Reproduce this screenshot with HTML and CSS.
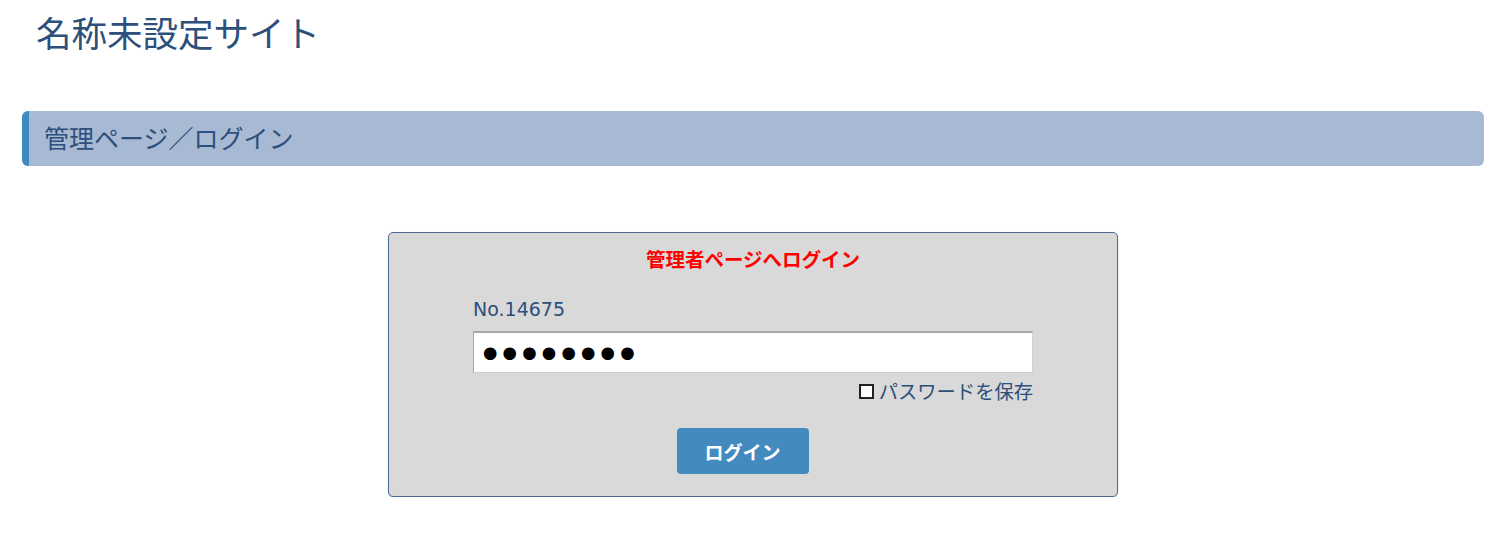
FILE: index.html
```html
<!DOCTYPE html>
<html lang="ja">

<head>
    <meta charset="UTF-8" />
    <meta name="viewport" content="width=device-width, initial-scale=1.0" />
    <title>管理ページ／ログイン</title>
    <link rel="stylesheet" href="styles.css">
</head>

<body>
    <!-- Site title -->
    <header class="site-header">
        <h1 class="site-title">名称未設定サイト</h1>
    </header>

    <!-- Page heading -->
    <h2 class="page-title">管理ページ／ログイン</h2>

    <!-- Login form -->
    <section class="login">
        <form class="login-box" action="#" onsubmit="return false;">
            <h3 class="login-title">管理者ページへログイン</h3>
            <div class="login-fields">
                <label class="login-no" for="pass">No.14675</label>
                <input type="text" id="pass" class="login-input" value="●●●●●●●●" readonly />
                <label class="login-save">
                    <span class="check"></span>パスワードを保存
                </label>
            </div>
            <div class="login-actions">
                <button type="submit" class="login-btn">ログイン</button>
            </div>
        </form>
    </section>
</body>

</html>
```

FILE: styles.css
```css
* {
    margin: 0;
    padding: 0;
    box-sizing: border-box;
}

body {
    font-family: "DejaVu Sans", "Noto Sans CJK JP", sans-serif;
    background: #fff;
    color: #2c4f7b;
    padding: 0 22px;
}

/* Site title */
.site-header {
    height: 111px;
    padding: 8px 0 0 14px;
}

.site-title {
    font-family: "Noto Sans CJK JP", sans-serif;
    font-weight: normal;
    font-size: 35.5px;
    line-height: 48px;
    color: #2c4f7b;
}

/* Page heading */
.page-title {
    height: 55px;
    background-color: #a8bad3;
    border-left: 7px solid #3f8ac0;
    border-radius: 6px;
    padding-left: 15px;
    font-family: "Noto Sans CJK JP", sans-serif;
    font-weight: normal;
    font-size: 25px;
    line-height: 53px;
    color: #2c4f7b;
}

/* Login */
.login {
    display: flex;
    justify-content: center;
    padding-top: 66px;
}

.login-box {
    width: 730px;
    height: 265px;
    background-color: #d9d9d9;
    border: 1px solid #4b6b90;
    border-radius: 5px;
    box-shadow: 0 1px 2px rgba(0, 0, 0, 0.15);
    padding: 12px 84px 0;
}

.login-title {
    text-align: center;
    font-family: "Noto Sans CJK JP", sans-serif;
    font-weight: bold;
    font-size: 19.5px;
    line-height: 28px;
    color: #ff0000;
}

.login-fields {
    display: flex;
    flex-direction: column;
    margin-top: 22px;
}

.login-no {
    font-size: 19px;
    line-height: 28px;
    color: #2c4f7b;
    margin-bottom: 8px;
}

.login-input {
    width: 100%;
    height: 42px;
    background: #fff;
    border: 1px solid #d0d0d0;
    border-top: 2px solid #a8a8a8;
    border-left: 1px solid #a8a8a8;
    padding: 0 8px 0 9px;
    font-family: "DejaVu Sans", sans-serif;
    font-size: 16.5px;
    letter-spacing: 5.2px;
    color: #000;
    outline: none;
}

.login-save {
    display: flex;
    align-items: center;
    justify-content: flex-end;
    font-family: "Noto Sans CJK JP", sans-serif;
    font-size: 19.3px;
    line-height: 36px;
    color: #2c4f7b;
}

.check {
    width: 15px;
    height: 15px;
    border: 2px solid #222;
    background: #fff;
    margin-right: 5px;
}

.login-actions {
    display: flex;
    justify-content: center;
    margin-top: 19px;
}

.login-btn {
    width: 132px;
    height: 46px;
    background-color: #438bbf;
    border: none;
    border-radius: 4px;
    color: #fff;
    font-family: "Noto Sans CJK JP", sans-serif;
    font-weight: bold;
    font-size: 19px;
    cursor: pointer;
    margin-left: -21px;
}
```
